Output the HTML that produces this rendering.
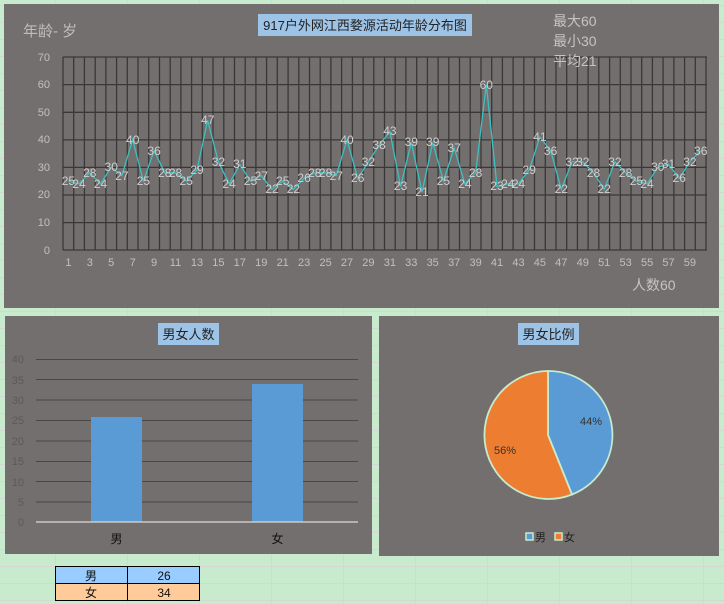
<!DOCTYPE html>
<html><head><meta charset="utf-8"><style>
html,body{margin:0;padding:0;}
body{width:724px;height:604px;overflow:hidden;position:relative;
background-color:#c8ebcd;
background-image:linear-gradient(to right,#d6d6d6 1px,transparent 1px),linear-gradient(to bottom,#d6d6d6 1px,transparent 1px);
background-size:72px 17px;background-position:55px 5px;
font-family:"Liberation Sans","Noto Sans CJK SC",sans-serif;}
svg{position:absolute;left:0;top:0;}
</style></head><body>
<svg width="724" height="604" viewBox="0 0 724 604" font-family="Liberation Sans, Noto Sans CJK SC, sans-serif">
<rect x="4" y="4" width="715" height="304" fill="#736f6e"/>
<rect x="258" y="14" width="214" height="22" fill="#9dc3e6"/>
<text x="365" y="30" font-size="13" fill="#222" text-anchor="middle">917户外网江西婺源活动年龄分布图</text>
<text x="23" y="36" font-size="15" fill="#bdbdbd">年龄- 岁</text>
<text x="632" y="290" font-size="14" fill="#c4c4c4">人数60</text>
<g stroke="#3a3837" stroke-width="1.3" fill="none">
<path d="M63 57H707M63 84.6H707M63 112.3H707M63 139.9H707M63 167.4H707M63 195H707M63 222.6H707M63 250H707"/>
</g>
<g stroke="#3a3837" stroke-width="1.3">
<path d="M63 57V250M73.7 57V250M84.4 57V250M95.2 57V250M105.9 57V250M116.6 57V250M127.3 57V250M138 57V250M148.7 57V250M159.5 57V250M170.2 57V250M180.9 57V250M191.6 57V250M202.3 57V250M213 57V250M223.8 57V250M234.5 57V250M245.2 57V250M255.9 57V250M266.6 57V250M277.3 57V250M288.1 57V250M298.8 57V250M309.5 57V250M320.2 57V250M330.9 57V250M341.6 57V250M352.4 57V250M363.1 57V250M373.8 57V250M384.5 57V250M395.2 57V250M405.9 57V250M416.7 57V250M427.4 57V250M438.1 57V250M448.8 57V250M459.5 57V250M470.2 57V250M481 57V250M491.7 57V250M502.4 57V250M513.1 57V250M523.8 57V250M534.5 57V250M545.3 57V250M556 57V250M566.7 57V250M577.4 57V250M588.1 57V250M598.8 57V250M609.6 57V250M620.3 57V250M631 57V250M641.7 57V250M652.4 57V250M663.1 57V250M673.9 57V250M684.6 57V250M695.3 57V250M706 57V250"/>
</g>
<text x="553" y="26" font-size="14" fill="#c4c4c4">最大60</text>
<text x="553" y="46" font-size="14" fill="#c4c4c4">最小30</text>
<text x="553" y="66" font-size="14" fill="#c4c4c4">平均21</text>
<g font-size="11" fill="#c0c0c0" text-anchor="end">
<text x="50" y="61">70</text><text x="50" y="88">60</text><text x="50" y="116">50</text><text x="50" y="143">40</text><text x="50" y="171">30</text><text x="50" y="198">20</text><text x="50" y="226">10</text><text x="50" y="254">0</text>
</g>
<g font-size="11" fill="#c0c0c0" text-anchor="middle">
<text x="68.4" y="266">1</text><text x="89.8" y="266">3</text><text x="111.2" y="266">5</text><text x="132.7" y="266">7</text><text x="154.1" y="266">9</text><text x="175.5" y="266">11</text><text x="197" y="266">13</text><text x="218.4" y="266">15</text><text x="239.8" y="266">17</text><text x="261.3" y="266">19</text><text x="282.7" y="266">21</text><text x="304.1" y="266">23</text><text x="325.6" y="266">25</text><text x="347" y="266">27</text><text x="368.4" y="266">29</text><text x="389.9" y="266">31</text><text x="411.3" y="266">33</text><text x="432.7" y="266">35</text><text x="454.2" y="266">37</text><text x="475.6" y="266">39</text><text x="497" y="266">41</text><text x="518.5" y="266">43</text><text x="539.9" y="266">45</text><text x="561.3" y="266">47</text><text x="582.8" y="266">49</text><text x="604.2" y="266">51</text><text x="625.6" y="266">53</text><text x="647.1" y="266">55</text><text x="668.5" y="266">57</text><text x="689.9" y="266">59</text>
</g>
<g transform="translate(57.64,250) scale(10.717,-2.757)">
<polyline fill="none" stroke="#3cc0c2" stroke-width="1.3" vector-effect="non-scaling-stroke" points="1,25 2,24 3,28 4,24 5,30 6,27 7,40 8,25 9,36 10,28 11,28 12,25 13,29 14,47 15,32 16,24 17,31 18,25 19,27 20,22 21,25 22,22 23,26 24,28 25,28 26,27 27,40 28,26 29,32 30,38 31,43 32,23 33,39 34,21 35,39 36,25 37,37 38,24 39,28 40,60 41,23 42,24 43,24 44,29 45,41 46,36 47,22 48,32 49,32 50,28 51,22 52,32 53,28 54,25 55,24 56,30 57,31 58,26 59,32 60,36"/>
</g>
<g font-size="12" fill="#cfcfcf" text-anchor="middle">
<text x="68.4" y="185">25</text><text x="79.1" y="188">24</text><text x="89.8" y="177">28</text><text x="100.5" y="188">24</text><text x="111.2" y="171">30</text><text x="121.9" y="180">27</text><text x="132.7" y="144">40</text><text x="143.4" y="185">25</text><text x="154.1" y="155">36</text><text x="164.8" y="177">28</text><text x="175.5" y="177">28</text><text x="186.2" y="185">25</text><text x="197" y="174">29</text><text x="207.7" y="124">47</text><text x="218.4" y="166">32</text><text x="229.1" y="188">24</text><text x="239.8" y="168">31</text><text x="250.5" y="185">25</text><text x="261.3" y="180">27</text><text x="272" y="193">22</text><text x="282.7" y="185">25</text><text x="293.4" y="193">22</text><text x="304.1" y="182">26</text><text x="314.8" y="177">28</text><text x="325.6" y="177">28</text><text x="336.3" y="180">27</text><text x="347" y="144">40</text><text x="357.7" y="182">26</text><text x="368.4" y="166">32</text><text x="379.1" y="149">38</text><text x="389.9" y="135">43</text><text x="400.6" y="190">23</text><text x="411.3" y="146">39</text><text x="422" y="196">21</text><text x="432.7" y="146">39</text><text x="443.4" y="185">25</text><text x="454.2" y="152">37</text><text x="464.9" y="188">24</text><text x="475.6" y="177">28</text><text x="486.3" y="89">60</text><text x="497" y="190">23</text><text x="507.8" y="188">24</text><text x="518.5" y="188">24</text><text x="529.2" y="174">29</text><text x="539.9" y="141">41</text><text x="550.6" y="155">36</text><text x="561.3" y="193">22</text><text x="572.1" y="166">32</text><text x="582.8" y="166">32</text><text x="593.5" y="177">28</text><text x="604.2" y="193">22</text><text x="614.9" y="166">32</text><text x="625.6" y="177">28</text><text x="636.4" y="185">25</text><text x="647.1" y="188">24</text><text x="657.8" y="171">30</text><text x="668.5" y="168">31</text><text x="679.2" y="182">26</text><text x="689.9" y="166">32</text><text x="700.7" y="155">36</text>
</g>

<rect x="5" y="316" width="367" height="238" fill="#736f6e"/>
<rect x="158" y="323" width="61" height="22" fill="#9dc3e6"/>
<text x="188.5" y="339" font-size="13" fill="#222" text-anchor="middle">男女人数</text>
<g stroke="#4a4847" stroke-width="1">
<path d="M36 359.5H358M36 379.5H358M36 400H358M36 420.5H358M36 441H358M36 461.5H358M36 481.5H358M36 502H358"/>
</g>
<g font-size="11" fill="#5c5a59" text-anchor="end">
<text x="24" y="363">40</text><text x="24" y="384">35</text><text x="24" y="404">30</text><text x="24" y="424">25</text><text x="24" y="445">20</text><text x="24" y="465">15</text><text x="24" y="486">10</text><text x="24" y="506">5</text><text x="24" y="526">0</text>
</g>
<rect x="91" y="417" width="51" height="105" fill="#5b9bd5"/>
<rect x="252" y="384" width="51" height="138" fill="#5b9bd5"/>
<path d="M36 522H358" stroke="#d9d9d9" stroke-width="1.2"/>
<text x="116.5" y="543" font-size="12" fill="#111" text-anchor="middle">男</text>
<text x="277.5" y="543" font-size="12" fill="#111" text-anchor="middle">女</text>

<rect x="379" y="316" width="340" height="240" fill="#736f6e"/>
<rect x="518" y="323" width="61" height="22" fill="#9dc3e6"/>
<text x="548.5" y="339" font-size="13" fill="#222" text-anchor="middle">男女比例</text>
<path d="M548 435L548 371A64 64 0 0 1 572 494.5Z" fill="#5b9bd5" stroke="#c8ebcd" stroke-width="1.8"/>
<path d="M548 435L572 494.5A64 64 0 1 1 548 371Z" fill="#ed7d31" stroke="#c8ebcd" stroke-width="1.8"/>
<text x="591" y="425" font-size="11" fill="#333" text-anchor="middle">44%</text>
<text x="505" y="454" font-size="11" fill="#333" text-anchor="middle">56%</text>
<rect x="526" y="533" width="7" height="7" fill="#5b9bd5" stroke="#c8ebcd" stroke-width="1.5"/>
<text x="535" y="541" font-size="11" fill="#222">男</text>
<rect x="555" y="533" width="7" height="7" fill="#ed7d31" stroke="#c8ebcd" stroke-width="1.5"/>
<text x="564" y="541" font-size="11" fill="#222">女</text>

<rect x="55.5" y="566.5" width="144" height="17" fill="#99ccff" stroke="#000"/>
<rect x="55.5" y="583.5" width="144" height="17" fill="#ffcc99" stroke="#000"/>
<path d="M127.5 566V601" stroke="#000"/>
<g font-size="12" fill="#111" text-anchor="middle">
<text x="91" y="580">男</text><text x="164" y="580">26</text>
<text x="91" y="597">女</text><text x="164" y="597">34</text>
</g>
</svg>
</body></html>
